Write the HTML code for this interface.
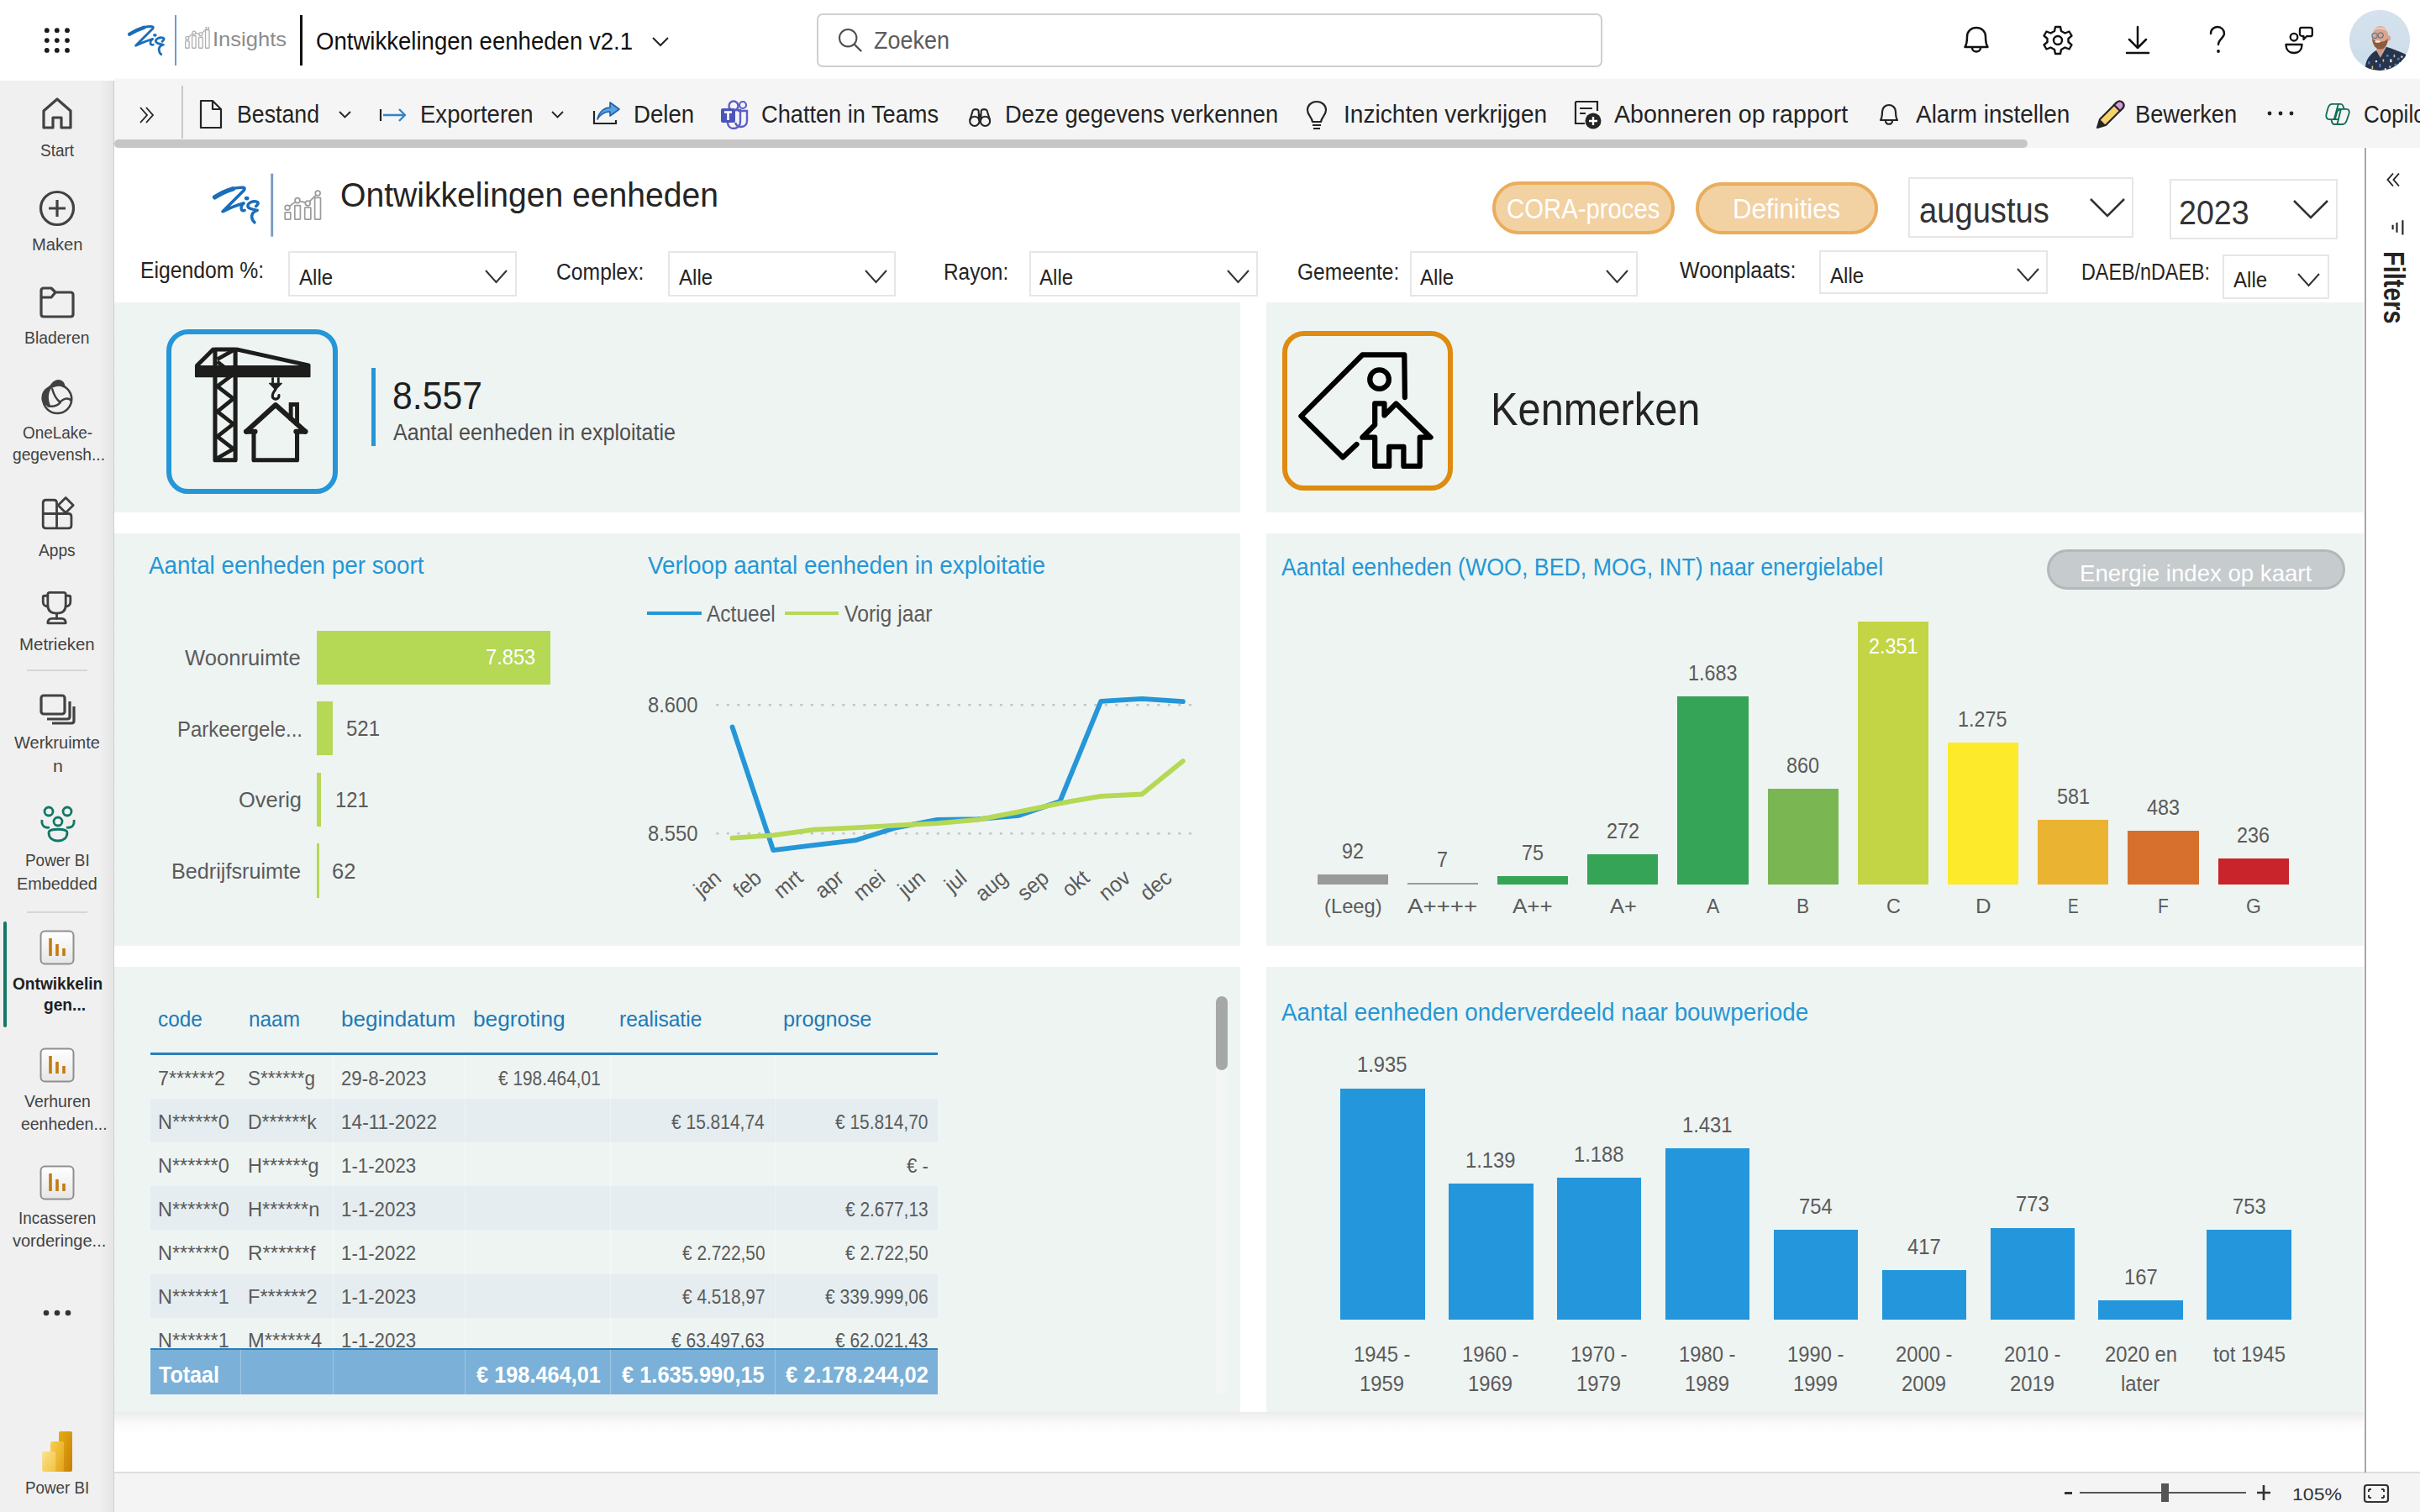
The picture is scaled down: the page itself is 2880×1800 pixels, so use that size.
<!DOCTYPE html>
<html><head><meta charset="utf-8"><title>Ontwikkelingen eenheden v2.1 - Power BI</title>
<style>
html,body{margin:0;padding:0;width:2880px;height:1800px;overflow:hidden;background:#fff;font-family:"Liberation Sans", sans-serif;}
.t{position:absolute;white-space:nowrap;}
.a{position:absolute;}

</style></head><body>
<div class="a" style="left:0px;top:96px;width:136px;height:1704px;background:#f0f0f0;"></div>
<div class="a" style="left:136px;top:95px;width:2744px;height:81px;background:#f5f5f5;box-shadow:0 -1px 2px rgba(0,0,0,0.06);"></div>
<div class="a" style="left:136px;top:166px;width:2277px;height:10px;background:#c6c6c6;border-radius:5px;"></div>
<div class="a" style="left:136px;top:1751.6px;width:2744px;height:48.4px;background:#f4f4f4;border-top:2px solid #dedede;box-sizing:border-box;"></div>
<div class="a" style="left:118px;top:96px;width:18px;height:1704px;background:linear-gradient(to right, rgba(0,0,0,0), rgba(0,0,0,0.05));"></div>
<div class="a" style="left:134.5px;top:96px;width:1.5px;height:1704px;background:rgba(0,0,0,0.09);"></div>
<div class="a" style="left:2814px;top:176px;width:1.8px;height:1577px;background:#a9a6a4;"></div>
<svg class="a" style="left:0px;top:0px;" width="100" height="96" viewBox="0 0 100 96"><circle cx="55.8" cy="36.2" r="2.9" fill="#1b1b1b"/><circle cx="55.8" cy="48.1" r="2.9" fill="#1b1b1b"/><circle cx="55.8" cy="59.9" r="2.9" fill="#1b1b1b"/><circle cx="67.8" cy="36.2" r="2.9" fill="#1b1b1b"/><circle cx="67.8" cy="48.1" r="2.9" fill="#1b1b1b"/><circle cx="67.8" cy="59.9" r="2.9" fill="#1b1b1b"/><circle cx="80" cy="36.2" r="2.9" fill="#1b1b1b"/><circle cx="80" cy="48.1" r="2.9" fill="#1b1b1b"/><circle cx="80" cy="59.9" r="2.9" fill="#1b1b1b"/></svg>
<svg class="a" style="left:147.8px;top:24.7px;" width="55.79" height="43.84" viewBox="0 0 1924 1512"><path d="M210 545 C 500 330, 900 200, 1140 230 C 1200 240, 1190 290, 1150 330 L 470 1010 C 700 900, 950 800, 1150 745" fill="none" stroke="#1a6dba" stroke-width="100" stroke-linecap="round" stroke-linejoin="round"/>
<path d="M1150 745 C 1080 800, 1050 900, 1090 960 C 1120 990, 1170 985, 1185 970" fill="none" stroke="#1a6dba" stroke-width="96" stroke-linecap="round"/>
<ellipse cx="1255" cy="580" rx="78" ry="64" fill="#1a6dba"/>
<path d="M1555 840 C 1620 790, 1660 720, 1580 690 C 1450 660, 1290 720, 1290 830 C 1290 920, 1450 940, 1600 975 C 1500 1000, 1420 1050, 1420 1180 C 1420 1260, 1460 1320, 1510 1370" fill="none" stroke="#1a6dba" stroke-width="96" stroke-linecap="round" stroke-linejoin="round"/>
<path d="M210 545 C 400 420, 600 330, 800 270" fill="none" stroke="#1a6dba" stroke-width="150" stroke-linecap="round"/></svg>
<div class="a" style="left:208px;top:18px;width:2px;height:60px;background:#6d9bd0;"></div>
<svg class="a" style="left:218px;top:32px;" width="34" height="26" viewBox="0 0 34 26"><g transform="scale(0.0886)" fill="none" stroke="#b0b0b0" stroke-width="15"><rect x="30" y="190" width="50" height="95" rx="5"/><rect x="120" y="120" width="50" height="165" rx="5"/><rect x="210" y="140" width="52" height="145" rx="5"/><rect x="300" y="40" width="50" height="245" rx="5"/><path d="M55 150 L145 80 L235 100 L325 15"/><circle cx="55" cy="150" r="22" fill="#fff"/><circle cx="145" cy="80" r="22" fill="#fff"/><circle cx="235" cy="100" r="22" fill="#fff"/><circle cx="325" cy="15" r="20" fill="#fff"/></g></svg>
<div class="t" style="left:252.86px;top:35.40px;font-size:23.84px;line-height:23.84px;color:#8c8c8c;transform:scaleX(1.0723);transform-origin:0 0;">Insights</div>
<div class="a" style="left:357px;top:18px;width:3px;height:60px;background:#111;"></div>
<div class="t" style="left:376.05px;top:34.50px;font-size:29.07px;line-height:29.07px;color:#111;transform:scaleX(0.9486);transform-origin:0 0;">Ontwikkelingen eenheden v2.1</div>
<svg class="a" style="left:775px;top:42px;" width="22" height="16" viewBox="0 0 22 16"><path d="M2 3 L11 12 L20 3" fill="none" stroke="#222" stroke-width="2"/></svg>
<div class="a" style="left:972px;top:16px;width:935px;height:64px;border:2px solid #cfcfcf;border-radius:7px;box-sizing:border-box;background:#fff;"></div>
<svg class="a" style="left:996px;top:32px;" width="32" height="32" viewBox="0 0 32 32"><circle cx="13.2" cy="13.2" r="10.2" fill="none" stroke="#505050" stroke-width="2.1"/><path d="M20.8 20.8 L28.5 28.5" stroke="#505050" stroke-width="2.3" stroke-linecap="round"/></svg>
<div class="t" style="left:1040.00px;top:34.20px;font-size:28.63px;line-height:28.63px;color:#5c5c5c;transform:scaleX(0.9412);transform-origin:0 0;">Zoeken</div>
<svg class="a" style="left:2332px;top:26px;" width="40" height="42" viewBox="0 0 40 42"><path d="M6.5 30 C 9 26, 9 22, 9 17.5 C 9 11, 14 7, 20 7 C 26 7, 31 11, 31 17.5 C 31 22, 31 26, 33.5 30 Z" fill="none" stroke="#111" stroke-width="2.5" stroke-linejoin="round"/><path d="M15 31 C 15 37, 25 37, 25 31" fill="none" stroke="#111" stroke-width="2.5"/></svg>
<svg class="a" style="left:2428px;top:28px;" width="42" height="40" viewBox="0 0 42 40"><g transform="translate(21,20)"><path d="M-3 -16 L3 -16 L4 -11 L8.5 -8.5 L13.5 -10.5 L16.5 -5.5 L12.5 -2 L12.5 2 L16.5 5.5 L13.5 10.5 L8.5 8.5 L4 11 L3 16 L-3 16 L-4 11 L-8.5 8.5 L-13.5 10.5 L-16.5 5.5 L-12.5 2 L-12.5 -2 L-16.5 -5.5 L-13.5 -10.5 L-8.5 -8.5 L-4 -11 Z" fill="none" stroke="#111" stroke-width="2.4" stroke-linejoin="round"/><circle r="5" fill="none" stroke="#111" stroke-width="2.4"/></g></svg>
<svg class="a" style="left:2526px;top:28px;" width="36" height="40" viewBox="0 0 36 40"><path d="M18 4 L18 29 M8 19 L18 29 L28 19" fill="none" stroke="#111" stroke-width="2.5" stroke-linecap="round" stroke-linejoin="round"/><path d="M5 35 L31 35" stroke="#111" stroke-width="2.5" stroke-linecap="round"/></svg>
<svg class="a" style="left:2624px;top:30px;" width="30" height="36" viewBox="0 0 30 36"><path d="M7 10 C 7 4, 12 2, 15 2 C 20 2, 23 6, 23 10 C 23 15, 16 17, 16 23" fill="none" stroke="#111" stroke-width="2.4" stroke-linecap="round"/><circle cx="16" cy="31" r="1.9" fill="#111"/></svg>
<svg class="a" style="left:2716px;top:30px;" width="42" height="36" viewBox="0 0 42 36"><circle cx="14" cy="14.2" r="4.3" fill="none" stroke="#111" stroke-width="2.3"/><path d="M4.5 23 L23.5 23 C 23.5 29.5, 19.5 33, 14 33 C 8.5 33, 4.5 29.5, 4.5 23 Z" fill="none" stroke="#111" stroke-width="2.3" stroke-linejoin="round"/><path d="M23 2.8 L33.5 2.8 C 35 2.8, 35.8 3.6, 35.8 5 L35.8 11 C 35.8 12.4, 35 13.2, 33.5 13.2 L29 13.2 L25.5 17 L25.5 13.2 C 23.9 13.2, 21 12.4, 21 11 L21 5 C 21 3.6, 21.8 2.8, 23 2.8 Z" fill="none" stroke="#111" stroke-width="2.3" stroke-linejoin="round"/></svg>
<svg class="a" style="left:2790px;top:8px;" width="85" height="82" viewBox="0 0 1567 1512"><defs><clipPath id="avc"><circle cx="775" cy="735" r="665"/></clipPath><linearGradient id="sky" x1="0" y1="0" x2="0" y2="1"><stop offset="0" stop-color="#d6e3ee"/><stop offset="1" stop-color="#c9dbe8"/></linearGradient></defs>
<g clip-path="url(#avc)"><rect width="1567" height="1512" fill="url(#sky)"/>
<path d="M700 960 L790 1120 L900 900 L880 850 L720 880 Z" fill="#d39a88"/>
<path d="M430 1512 L470 1250 C 500 1120, 600 1020, 700 960 L790 1120 L920 880 C 1050 920, 1200 980, 1340 1040 L1600 1512 Z" fill="#26344c"/>
<rect x="520" y="1200" width="40" height="60" fill="#4f7fc0"/><rect x="600" y="1300" width="30" height="70" fill="#d9c08a"/><rect x="680" y="1180" width="40" height="40" fill="#e8e8e8"/><rect x="760" y="1250" width="40" height="80" fill="#4f7fc0"/><rect x="840" y="1150" width="30" height="60" fill="#d9c08a"/><rect x="920" y="1050" width="50" height="50" fill="#4f7fc0"/><rect x="1000" y="1150" width="40" height="70" fill="#e8e8e8"/><rect x="1080" y="1050" width="30" height="60" fill="#d9c08a"/><rect x="1160" y="1120" width="50" height="50" fill="#4f7fc0"/><rect x="1240" y="1080" width="40" height="40" fill="#e8e8e8"/><rect x="880" y="1350" width="40" height="60" fill="#e8e8e8"/><rect x="980" y="1300" width="40" height="40" fill="#d9c08a"/><rect x="1100" y="1250" width="50" height="60" fill="#4f7fc0"/><rect x="1200" y="1220" width="30" height="50" fill="#d9c08a"/><rect x="560" y="1420" width="40" height="40" fill="#d9c08a"/><rect x="700" y="1420" width="40" height="50" fill="#4f7fc0"/>
<ellipse cx="975" cy="690" rx="38" ry="60" fill="#d9a08a"/>
<ellipse cx="790" cy="680" rx="180" ry="255" fill="#dda58f"/>
<path d="M650 520 C 700 430, 900 420, 960 560 C 900 470, 720 470, 650 520 Z" fill="#ecd2c6"/>
<path d="M610 690 C 615 850, 700 935, 790 935 C 880 935, 945 850, 955 690 C 900 790, 680 800, 610 690 Z" fill="#8c5a3c"/>
<ellipse cx="730" cy="765" rx="60" ry="24" fill="#f4efea"/>
<circle cx="665" cy="635" r="58" fill="none" stroke="#6f7b88" stroke-width="24"/><circle cx="795" cy="628" r="58" fill="none" stroke="#6f7b88" stroke-width="24"/>
</g></svg>
<svg class="a" style="left:160px;top:122px;" width="30" height="30" viewBox="0 0 30 30"><path d="M7 6 L15 15 L7 24 M14 6 L22 15 L14 24" fill="none" stroke="#222" stroke-width="1.8"/></svg>
<div class="a" style="left:216px;top:102px;width:2px;height:63px;background:#c8c8c8;"></div>
<svg class="a" style="left:236px;top:118px;" width="30" height="36" viewBox="0 0 30 36"><path d="M3 2 L17 2 L27 12 L27 34 L3 34 Z M17 2 L17 12 L27 12" fill="none" stroke="#242424" stroke-width="2.2" stroke-linejoin="round"/></svg>
<div class="t" style="left:282.19px;top:121.10px;font-size:29.51px;line-height:29.51px;color:#242424;transform:scaleX(0.9061);transform-origin:0 0;">Bestand</div>
<svg class="a" style="left:402px;top:131px;" width="17" height="11" viewBox="0 0 17 11"><path d="M2 2 L8.5 8.5 L15 2" fill="none" stroke="#242424" stroke-width="1.8"/></svg>
<svg class="a" style="left:450px;top:126px;" width="36" height="22" viewBox="0 0 36 22"><path d="M3 4 L3 18" stroke="#242424" stroke-width="2.2"/><path d="M6 11 L32 11 M25 4 L32 11 L25 18" fill="none" stroke="#2f86c6" stroke-width="2.4" stroke-linejoin="round"/></svg>
<div class="t" style="left:500.13px;top:121.10px;font-size:29.51px;line-height:29.51px;color:#242424;transform:scaleX(0.9333);transform-origin:0 0;">Exporteren</div>
<svg class="a" style="left:655px;top:131px;" width="17" height="11" viewBox="0 0 17 11"><path d="M2 2 L8.5 8.5 L15 2" fill="none" stroke="#242424" stroke-width="1.8"/></svg>
<svg class="a" style="left:704px;top:118px;" width="36" height="32" viewBox="0 0 36 32"><path d="M3 14 L3 29 L29 29 L29 25" fill="none" stroke="#242424" stroke-width="2.2"/><path d="M7 24 C 9 14, 16 10, 22 10 L22 4 L33 12 L22 20 L22 15 C 16 15, 11 17, 7 24 Z" fill="#5aa3e3" stroke="#1f5fa8" stroke-width="1.6" stroke-linejoin="round"/></svg>
<div class="t" style="left:754.13px;top:121.10px;font-size:29.51px;line-height:29.51px;color:#242424;transform:scaleX(0.9366);transform-origin:0 0;">Delen</div>
<svg class="a" style="left:856px;top:118px;" width="36" height="36" viewBox="0 0 36 36"><circle cx="28" cy="7" r="4" fill="none" stroke="#5b5fc7" stroke-width="2.2"/><path d="M22 14 L33 14 L33 26 C 33 31, 29 33, 26 33 C 22 33, 20 31, 19 28" fill="none" stroke="#5b5fc7" stroke-width="2.4"/><circle cx="17" cy="8" r="5.5" fill="none" stroke="#5b5fc7" stroke-width="2.4"/><path d="M10 13 L25 13 L25 27 C 25 32, 21 35, 17 35 C 13 35, 10 32, 10 28 Z" fill="none" stroke="#5b5fc7" stroke-width="2.4"/><rect x="2" y="11" width="17" height="17" rx="2" fill="#4b53bc"/><path d="M6 15.5 L15 15.5 M10.5 15.5 L10.5 25" stroke="#fff" stroke-width="2.6"/></svg>
<div class="t" style="left:906.08px;top:121.10px;font-size:29.51px;line-height:29.51px;color:#242424;transform:scaleX(0.9218);transform-origin:0 0;">Chatten in Teams</div>
<svg class="a" style="left:840px;top:100px;" width="360" height="60" viewBox="0 0 2420 403"><g fill="none" stroke="#242424" stroke-width="14" stroke-linejoin="round"><path d="M2112 290 L2135 215 C 2140 198, 2178 198, 2182 215 L2186 290"/><path d="M2273 290 L2250 215 C 2245 198, 2207 198, 2203 215 L2199 290"/><circle cx="2150" cy="298" r="38"/><circle cx="2235" cy="298" r="38"/></g><rect x="2180" y="240" width="25" height="25" fill="#242424"/></svg>
<div class="t" style="left:1196.15px;top:121.10px;font-size:29.51px;line-height:29.51px;color:#242424;transform:scaleX(0.9265);transform-origin:0 0;">Deze gegevens verkennen</div>
<svg class="a" style="left:1552px;top:118px;" width="30" height="38" viewBox="0 0 30 38"><path d="M15 3 C 8 3, 4 8, 4 13 C 4 19, 9 21, 10 27 L20 27 C 21 21, 26 19, 26 13 C 26 8, 22 3, 15 3 Z" fill="none" stroke="#242424" stroke-width="2.2"/><path d="M10 31 L20 31 M11 35 L19 35" stroke="#242424" stroke-width="2.2"/></svg>
<div class="t" style="left:1599.09px;top:121.10px;font-size:29.51px;line-height:29.51px;color:#242424;transform:scaleX(0.9532);transform-origin:0 0;">Inzichten verkrijgen</div>
<svg class="a" style="left:1872px;top:118px;" width="36" height="38" viewBox="0 0 36 38"><path d="M3 3 L29 3 L29 14 M3 3 L3 29 L14 29" fill="none" stroke="#242424" stroke-width="2.2"/><path d="M8 11 L23 11 M8 17 L15 17" stroke="#242424" stroke-width="2.2"/><circle cx="24" cy="26" r="9.5" fill="#242424"/><path d="M24 21 L24 31 M19 26 L29 26" stroke="#fff" stroke-width="2.4"/></svg>
<div class="t" style="left:1921.00px;top:121.10px;font-size:29.51px;line-height:29.51px;color:#242424;transform:scaleX(0.9692);transform-origin:0 0;">Abonneren op rapport</div>
<svg class="a" style="left:2234px;top:122px;" width="28" height="30" viewBox="0 0 28 30"><path d="M4 21 C 6 18, 6 15, 6 11 C 6 6, 10 3, 14 3 C 18 3, 22 6, 22 11 C 22 15, 22 18, 24 21 Z" fill="none" stroke="#242424" stroke-width="2.2" stroke-linejoin="round"/><path d="M10 22 C 10 27, 18 27, 18 22" fill="none" stroke="#242424" stroke-width="2.2"/></svg>
<div class="t" style="left:2280.00px;top:121.10px;font-size:29.51px;line-height:29.51px;color:#242424;transform:scaleX(0.9476);transform-origin:0 0;">Alarm instellen</div>
<svg class="a" style="left:2492px;top:118px;" width="38" height="38" viewBox="0 0 38 38"><path d="M4 34 L7 24 L27 4 C 29 2, 32 2, 34 4 C 36 6, 36 9, 34 11 L14 31 Z" fill="#f6d36f" stroke="#242424" stroke-width="2.2" stroke-linejoin="round"/><path d="M27 4 C 29 2, 32 2, 34 4 C 36 6, 36 9, 34 11 L31 14 L24 7 Z" fill="#d59be0" stroke="#242424" stroke-width="2.2"/><path d="M4 34 L7 24 L14 31 Z" fill="#242424"/></svg>
<div class="t" style="left:2541.15px;top:121.10px;font-size:29.51px;line-height:29.51px;color:#242424;transform:scaleX(0.9235);transform-origin:0 0;">Bewerken</div>
<svg class="a" style="left:2696px;top:130px;" width="36" height="10" viewBox="0 0 36 10"><circle cx="5" cy="5" r="2.4" fill="#242424"/><circle cx="18" cy="5" r="2.4" fill="#242424"/><circle cx="31" cy="5" r="2.4" fill="#242424"/></svg>
<svg class="a" style="left:2755px;top:110px;" width="60" height="50" viewBox="0 0 1814 1512"><g fill="none" stroke="#0f6e57" stroke-width="56" stroke-linecap="round" stroke-linejoin="round"><path d="M840 420 L620 420 C 540 420, 500 470, 470 560 L410 780 C 380 890, 420 970, 520 970 L840 970"/><path d="M840 420 L690 960"/><path d="M840 420 L930 420 C 990 420, 1010 460, 1045 590"/><path d="M820 600 L1140 600 C 1220 600, 1250 680, 1220 780 L1160 960 C 1120 1090, 1060 1150, 990 1150 L700 1150 C 640 1150, 610 1110, 590 990"/><path d="M930 620 L800 1150"/><path d="M920 615 C 850 615, 810 650, 790 720 L740 900 C 730 940, 720 960, 700 965"/></g></svg>
<div class="t" style="left:2813.12px;top:121.10px;font-size:29.51px;line-height:29.51px;color:#242424;transform:scaleX(0.8800);transform-origin:0 0;">Copilot</div>
<svg class="a" style="left:48px;top:114px;" width="40" height="42" viewBox="0 0 40 42"><path d="M4 18 L20 4 L36 18 L36 38 L25 38 L25 26 L15 26 L15 38 L4 38 Z" fill="none" stroke="#424242" stroke-width="3.2" stroke-linejoin="round"/></svg>
<div class="t" style="left:47.60px;top:168.90px;font-size:20.06px;line-height:20.06px;color:#424242;transform:scaleX(0.9470);transform-origin:0 0;">Start</div>
<svg class="a" style="left:46px;top:226px;" width="44" height="44" viewBox="0 0 44 44"><circle cx="22" cy="22" r="19.5" fill="none" stroke="#424242" stroke-width="3.2"/><path d="M22 12 L22 32 M12 22 L32 22" stroke="#424242" stroke-width="3.2"/></svg>
<div class="t" style="left:38.20px;top:280.60px;font-size:20.06px;line-height:20.06px;color:#424242;transform:scaleX(1.0031);transform-origin:0 0;">Maken</div>
<svg class="a" style="left:46px;top:340px;" width="44" height="40" viewBox="0 0 44 40"><path d="M3 6 C 3 4, 4 3, 6 3 L15 3 L20 8 L38 8 C 40 8, 41 9, 41 11 L41 34 C 41 36, 40 37, 38 37 L6 37 C 4 37, 3 36, 3 34 Z M3 14 L15 14 L20 8" fill="none" stroke="#424242" stroke-width="3.2" stroke-linejoin="round"/></svg>
<div class="t" style="left:29.43px;top:392.20px;font-size:20.06px;line-height:20.06px;color:#424242;transform:scaleX(0.9655);transform-origin:0 0;">Bladeren</div>
<svg class="a" style="left:40px;top:440px;" width="60" height="60" viewBox="0 0 1512 1512"><g fill="none" stroke="#404040" stroke-width="64" stroke-linecap="round"><circle cx="712" cy="885" r="428"/><path d="M560 585 C 610 770, 700 900, 790 975 C 850 925, 905 870, 1000 870 C 1050 870, 1090 890, 1120 920"/><path d="M440 1095 C 600 1125, 720 1075, 800 985"/></g><path d="M235 880 C 235 640, 370 530, 470 520 C 530 400, 630 305, 740 305 C 850 305, 925 380, 945 490 C 800 470, 600 520, 525 570 C 430 720, 430 900, 505 1075 C 470 1085, 440 1095, 410 1100 C 300 1030, 235 950, 235 880 Z" fill="#404040"/></svg>
<div class="t" style="left:26.50px;top:505.00px;font-size:20.06px;line-height:20.06px;color:#424242;transform:scaleX(0.9443);transform-origin:0 0;">OneLake-</div>
<div class="t" style="left:15.30px;top:531.40px;font-size:20.06px;line-height:20.06px;color:#424242;transform:scaleX(0.9582);transform-origin:0 0;">gegevensh...</div>
<svg class="a" style="left:40px;top:580px;" width="60" height="170" viewBox="0 0 534 1512"><g fill="none" stroke="#404040" stroke-width="25" stroke-linejoin="round" stroke-linecap="round"><path d="M245 280 L245 165 Q245 135 215 135 L130 135 Q100 135 100 165 L100 405 Q100 435 130 435 L370 435 Q400 435 400 405 L400 310 Q400 280 370 280 L100 280 M245 280 L245 435"/><path d="M340 110 L420 190 L340 270 L260 190 Z"/><path d="M170 1115 L320 1115 Q340 1115 340 1135 L340 1250 Q340 1335 245 1335 Q150 1335 150 1250 L150 1135 Q150 1115 170 1115 Z"/><path d="M150 1150 L115 1150 Q100 1150 100 1165 L100 1215 Q100 1260 150 1265 M340 1150 L375 1150 Q390 1150 390 1165 L390 1215 Q390 1260 340 1265"/><path d="M245 1335 L245 1392"/><path d="M195 1392 L295 1392 Q340 1392 340 1440 L150 1440 Q150 1392 195 1392 Z"/></g></svg>
<div class="t" style="left:46.40px;top:645.00px;font-size:20.06px;line-height:20.06px;color:#424242;transform:scaleX(0.9547);transform-origin:0 0;">Apps</div>
<div class="t" style="left:23.28px;top:756.60px;font-size:20.06px;line-height:20.06px;color:#424242;transform:scaleX(1.0190);transform-origin:0 0;">Metrieken</div>
<div class="a" style="left:32px;top:797px;width:72px;height:2px;background:#d6d6d6;"></div>
<svg class="a" style="left:46px;top:824.5px;" width="46" height="40" viewBox="0 0 46 40"><rect x="3" y="3" width="28" height="22" rx="3" fill="none" stroke="#424242" stroke-width="3.2"/><path d="M37 10 L37 28 C 37 30, 36 31, 34 31 L10 31" fill="none" stroke="#424242" stroke-width="3.2"/><path d="M42 16 L42 33 C 42 35, 41 36, 39 36 L16 36" fill="none" stroke="#424242" stroke-width="3.2"/></svg>
<div class="t" style="left:17.10px;top:874.40px;font-size:20.06px;line-height:20.06px;color:#424242;transform:scaleX(0.9985);transform-origin:0 0;">Werkruimte</div>
<div class="t" style="left:62.53px;top:902.00px;font-size:20.06px;line-height:20.06px;color:#424242;transform:scaleX(1.0667);transform-origin:0 0;">n</div>
<svg class="a" style="left:46px;top:958px;" width="46" height="46" viewBox="0 0 46 46"><g fill="none" stroke="#117865" stroke-width="2.8"><circle cx="12" cy="8" r="5"/><circle cx="34" cy="8" r="5"/><circle cx="23" cy="20" r="5"/><path d="M4 18 C 3 26, 8 28, 13 27 M42 18 C 43 26, 38 28, 33 27"/><path d="M12 33 C 12 28, 34 28, 34 33 C 34 40, 29 43, 23 43 C 17 43, 12 40, 12 33 Z"/></g></svg>
<div class="t" style="left:30.46px;top:1014.40px;font-size:20.06px;line-height:20.06px;color:#424242;transform:scaleX(0.9433);transform-origin:0 0;">Power BI</div>
<div class="t" style="left:20.41px;top:1042.30px;font-size:20.06px;line-height:20.06px;color:#424242;transform:scaleX(0.9872);transform-origin:0 0;">Embedded</div>
<div class="a" style="left:32px;top:1085px;width:72px;height:2px;background:#d6d6d6;"></div>
<div class="a" style="left:4px;top:1096.8px;width:3.8px;height:126px;background:#117865;border-radius:2px;"></div>
<svg class="a" style="left:47px;top:1107px;" width="42" height="42" viewBox="0 0 42 42"><defs><linearGradient id="rg" x1="0" y1="0" x2="0" y2="1"><stop offset="0" stop-color="#ffffff"/><stop offset="1" stop-color="#e6e6e6"/></linearGradient></defs><rect x="1.5" y="1.5" width="39" height="39" rx="5" fill="url(#rg)" stroke="#8f8f8f" stroke-width="2"/><path d="M13 10 L13 31 M21 17 L21 31 M29 22 L29 31" stroke="#c47b10" stroke-width="3.6"/></svg>
<div class="t" style="left:14.90px;top:1161.00px;font-size:20.79px;line-height:20.79px;color:#1f1f1f;font-weight:700;transform:scaleX(0.9192);transform-origin:0 0;">Ontwikkelin</div>
<div class="t" style="left:51.50px;top:1185.50px;font-size:20.79px;line-height:20.79px;color:#1f1f1f;font-weight:700;transform:scaleX(0.9222);transform-origin:0 0;">gen...</div>
<svg class="a" style="left:47px;top:1247px;" width="42" height="42" viewBox="0 0 42 42"><defs><linearGradient id="rg" x1="0" y1="0" x2="0" y2="1"><stop offset="0" stop-color="#ffffff"/><stop offset="1" stop-color="#e6e6e6"/></linearGradient></defs><rect x="1.5" y="1.5" width="39" height="39" rx="5" fill="url(#rg)" stroke="#8f8f8f" stroke-width="2"/><path d="M13 10 L13 31 M21 17 L21 31 M29 22 L29 31" stroke="#c47b10" stroke-width="3.6"/></svg>
<div class="t" style="left:29.30px;top:1301.20px;font-size:20.06px;line-height:20.06px;color:#424242;transform:scaleX(0.9687);transform-origin:0 0;">Verhuren</div>
<div class="t" style="left:24.90px;top:1328.30px;font-size:20.06px;line-height:20.06px;color:#424242;transform:scaleX(0.9690);transform-origin:0 0;">eenheden...</div>
<svg class="a" style="left:47px;top:1387px;" width="42" height="42" viewBox="0 0 42 42"><defs><linearGradient id="rg" x1="0" y1="0" x2="0" y2="1"><stop offset="0" stop-color="#ffffff"/><stop offset="1" stop-color="#e6e6e6"/></linearGradient></defs><rect x="1.5" y="1.5" width="39" height="39" rx="5" fill="url(#rg)" stroke="#8f8f8f" stroke-width="2"/><path d="M13 10 L13 31 M21 17 L21 31 M29 22 L29 31" stroke="#c47b10" stroke-width="3.6"/></svg>
<div class="t" style="left:22.06px;top:1440.20px;font-size:20.06px;line-height:20.06px;color:#424242;transform:scaleX(0.9415);transform-origin:0 0;">Incasseren</div>
<div class="t" style="left:14.90px;top:1467.30px;font-size:20.06px;line-height:20.06px;color:#424242;">vorderinge...</div>
<svg class="a" style="left:50px;top:1556px;" width="36" height="14" viewBox="0 0 36 14"><circle cx="5" cy="7" r="3.3" fill="#333"/><circle cx="18" cy="7" r="3.3" fill="#333"/><circle cx="31" cy="7" r="3.3" fill="#333"/></svg>
<svg class="a" style="left:48px;top:1702px;" width="40" height="52" viewBox="0 0 40 52"><defs><linearGradient id="pb1" x1="0" y1="0" x2="1" y2="1"><stop offset="0" stop-color="#e6ad10"/><stop offset="1" stop-color="#c87e0a"/></linearGradient><linearGradient id="pb2" x1="0" y1="0" x2="1" y2="1"><stop offset="0" stop-color="#f6d04d"/><stop offset="1" stop-color="#e3a21a"/></linearGradient><linearGradient id="pb3" x1="0" y1="0" x2="1" y2="1"><stop offset="0" stop-color="#fbe38a"/><stop offset="1" stop-color="#f2c244"/></linearGradient></defs><rect x="22" y="2" width="16" height="48" rx="2" fill="url(#pb1)"/><rect x="12.1" y="14" width="16" height="36" rx="2" fill="url(#pb2)"/><rect x="2.2" y="26" width="16" height="24" rx="2" fill="url(#pb3)"/></svg>
<div class="t" style="left:30.35px;top:1761.60px;font-size:19.77px;line-height:19.77px;color:#424242;transform:scaleX(0.9492);transform-origin:0 0;">Power BI</div>
<div class="a" style="left:2457px;top:1776px;width:9px;height:3px;background:#333;"></div>
<div class="a" style="left:2475px;top:1776px;width:198px;height:2px;background:#555;"></div>
<div class="a" style="left:2572px;top:1766px;width:9px;height:22px;background:#555;"></div>
<svg class="a" style="left:2684px;top:1766px;" width="20" height="22" viewBox="0 0 20 22"><path d="M10 2 L10 20 M2 11 L18 11" stroke="#333" stroke-width="2.6"/></svg>
<div class="t" style="left:2727.91px;top:1768.00px;font-size:21.08px;line-height:21.08px;color:#333;transform:scaleX(1.0932);transform-origin:0 0;">105%</div>
<svg class="a" style="left:2812px;top:1766px;" width="32" height="24" viewBox="0 0 32 24"><path d="M2 8 L2 5 C 2 3, 3 2, 5 2 L27 2 C 29 2, 30 3, 30 5 L30 19 C 30 21, 29 22, 27 22 L5 22 C 3 22, 2 21, 2 19 Z" fill="none" stroke="#333" stroke-width="2.2"/><path d="M7 7 L7 10 M7 7 L10 7 M25 7 L25 10 M25 7 L22 7 M7 17 L7 14 M7 17 L10 17 M25 17 L25 14 M25 17 L22 17" stroke="#333" stroke-width="2"/></svg>
<svg class="a" style="left:2830px;top:195px;" width="40" height="100" viewBox="0 0 40 100"><path d="M2848 206.5 L2841.5 214 L2848 221.5 M2855 206.5 L2848.5 214 L2855 221.5" fill="none" stroke="#252423" stroke-width="1.9" transform="translate(-2830,-195)"/><path d="M2859.4 262.2 L2859.4 279.6 M2852.5 265 L2852.5 276.8 M2847.6 267.8 L2847.6 273.3" stroke="#252423" stroke-width="2.1" transform="translate(-2830,-195)"/></svg>
<div class="t" style="left:2866.00px;top:299.32px;font-size:34.30px;line-height:34.30px;color:#252423;font-weight:700;transform:rotate(90deg) scaleX(0.8413);transform-origin:0 0;">Filters</div>
<svg class="a" style="left:240px;top:195px;" width="320" height="100" viewBox="0 0 320 100"><g transform="scale(0.13223)">
<rect x="622" y="88" width="22" height="567" fill="#7b9cc4"/>
<g fill="none" stroke="#9c9c9c" stroke-width="13"><rect x="750" y="438" width="50" height="62" rx="4"/><rect x="838" y="375" width="50" height="125" rx="4"/><rect x="928" y="395" width="54" height="105" rx="4"/><rect x="1018" y="305" width="52" height="195" rx="4"/><path d="M772 395 L862 330 L955 355 L1045 265"/><circle cx="772" cy="395" r="22" fill="#fff"/><circle cx="862" cy="330" r="22" fill="#fff"/><circle cx="955" cy="355" r="22" fill="#fff"/><circle cx="1045" cy="265" r="22" fill="#fff"/></g>
</g></svg>
<svg class="a" style="left:248px;top:215px;" width="70.0" height="55.0" viewBox="0 0 1924 1512"><path d="M210 545 C 500 330, 900 200, 1140 230 C 1200 240, 1190 290, 1150 330 L 470 1010 C 700 900, 950 800, 1150 745" fill="none" stroke="#1a6dba" stroke-width="100" stroke-linecap="round" stroke-linejoin="round"/>
<path d="M1150 745 C 1080 800, 1050 900, 1090 960 C 1120 990, 1170 985, 1185 970" fill="none" stroke="#1a6dba" stroke-width="96" stroke-linecap="round"/>
<ellipse cx="1255" cy="580" rx="78" ry="64" fill="#1a6dba"/>
<path d="M1555 840 C 1620 790, 1660 720, 1580 690 C 1450 660, 1290 720, 1290 830 C 1290 920, 1450 940, 1600 975 C 1500 1000, 1420 1050, 1420 1180 C 1420 1260, 1460 1320, 1510 1370" fill="none" stroke="#1a6dba" stroke-width="96" stroke-linecap="round" stroke-linejoin="round"/>
<path d="M210 545 C 400 420, 600 330, 800 270" fill="none" stroke="#1a6dba" stroke-width="150" stroke-linecap="round"/></svg>
<div class="t" style="left:405.03px;top:211.90px;font-size:40.41px;line-height:40.41px;color:#252423;transform:scaleX(0.9678);transform-origin:0 0;">Ontwikkelingen eenheden</div>
<div class="t" style="left:167.18px;top:307.70px;font-size:27.18px;line-height:27.18px;color:#252423;transform:scaleX(0.9110);transform-origin:0 0;">Eigendom %:</div>
<div class="a" style="left:343px;top:299px;width:272px;height:54px;border:2px solid #e6e6e6;box-sizing:border-box;background:#fff;"></div>
<div class="t" style="left:356.00px;top:316.50px;font-size:26.16px;line-height:26.16px;color:#252423;transform:scaleX(0.9200);transform-origin:0 0;">Alle</div>
<svg class="a" style="left:576px;top:320px;" width="29" height="18" viewBox="0 0 29 18"><path d="M2 2 L14.5 16 L27 2" fill="none" stroke="#333" stroke-width="2"/></svg>
<div class="t" style="left:662.09px;top:309.50px;font-size:27.18px;line-height:27.18px;color:#252423;transform:scaleX(0.9090);transform-origin:0 0;">Complex:</div>
<div class="a" style="left:795px;top:299px;width:271px;height:54px;border:2px solid #e6e6e6;box-sizing:border-box;background:#fff;"></div>
<div class="t" style="left:808.00px;top:316.50px;font-size:26.16px;line-height:26.16px;color:#252423;transform:scaleX(0.9200);transform-origin:0 0;">Alle</div>
<svg class="a" style="left:1028px;top:320px;" width="29" height="18" viewBox="0 0 29 18"><path d="M2 2 L14.5 16 L27 2" fill="none" stroke="#333" stroke-width="2"/></svg>
<div class="t" style="left:1123.21px;top:309.50px;font-size:27.18px;line-height:27.18px;color:#252423;transform:scaleX(0.8965);transform-origin:0 0;">Rayon:</div>
<div class="a" style="left:1225px;top:299px;width:272px;height:54px;border:2px solid #e6e6e6;box-sizing:border-box;background:#fff;"></div>
<div class="t" style="left:1237.00px;top:317.20px;font-size:26.16px;line-height:26.16px;color:#252423;transform:scaleX(0.9200);transform-origin:0 0;">Alle</div>
<svg class="a" style="left:1458.5px;top:319.5px;" width="29" height="18" viewBox="0 0 29 18"><path d="M2 2 L14.5 16 L27 2" fill="none" stroke="#333" stroke-width="2"/></svg>
<div class="t" style="left:1544.10px;top:309.50px;font-size:27.18px;line-height:27.18px;color:#252423;transform:scaleX(0.9024);transform-origin:0 0;">Gemeente:</div>
<div class="a" style="left:1678px;top:299px;width:271px;height:54px;border:2px solid #e6e6e6;box-sizing:border-box;background:#fff;"></div>
<div class="t" style="left:1690.00px;top:317.20px;font-size:26.16px;line-height:26.16px;color:#252423;transform:scaleX(0.9200);transform-origin:0 0;">Alle</div>
<svg class="a" style="left:1910px;top:319.5px;" width="29" height="18" viewBox="0 0 29 18"><path d="M2 2 L14.5 16 L27 2" fill="none" stroke="#333" stroke-width="2"/></svg>
<div class="t" style="left:1999.00px;top:307.80px;font-size:27.18px;line-height:27.18px;color:#252423;transform:scaleX(0.9195);transform-origin:0 0;">Woonplaats:</div>
<div class="a" style="left:2165px;top:298px;width:272px;height:52px;border:2px solid #e6e6e6;box-sizing:border-box;background:#fff;"></div>
<div class="t" style="left:2178.00px;top:314.50px;font-size:26.16px;line-height:26.16px;color:#252423;transform:scaleX(0.9200);transform-origin:0 0;">Alle</div>
<svg class="a" style="left:2398.5px;top:317.5px;" width="29" height="18" viewBox="0 0 29 18"><path d="M2 2 L14.5 16 L27 2" fill="none" stroke="#333" stroke-width="2"/></svg>
<div class="t" style="left:2477.28px;top:309.80px;font-size:27.18px;line-height:27.18px;color:#252423;transform:scaleX(0.8589);transform-origin:0 0;">DAEB/nDAEB:</div>
<div class="a" style="left:2645px;top:303px;width:127px;height:53px;border:2px solid #e6e6e6;box-sizing:border-box;background:#fff;"></div>
<div class="t" style="left:2658.00px;top:320.00px;font-size:26.16px;line-height:26.16px;color:#252423;transform:scaleX(0.9200);transform-origin:0 0;">Alle</div>
<svg class="a" style="left:2732.5px;top:324px;" width="29" height="18" viewBox="0 0 29 18"><path d="M2 2 L14.5 16 L27 2" fill="none" stroke="#333" stroke-width="2"/></svg>
<div class="a" style="left:1776px;top:216px;width:217px;height:63px;background:#f2d1a3;border:4px solid #e9ad5c;border-radius:32px;box-sizing:border-box;"></div>
<div class="t" style="left:1793.12px;top:232.00px;font-size:33.43px;line-height:33.43px;color:#ffffff;transform:scaleX(0.8774);transform-origin:0 0;">CORA-proces</div>
<div class="a" style="left:2018px;top:217px;width:217px;height:62px;background:#f2d1a3;border:4px solid #e9ad5c;border-radius:32px;box-sizing:border-box;"></div>
<div class="t" style="left:2062.14px;top:232.00px;font-size:33.43px;line-height:33.43px;color:#ffffff;transform:scaleX(0.9321);transform-origin:0 0;">Definities</div>
<div class="a" style="left:2271px;top:211px;width:268px;height:72px;border:2px solid #e6e6e6;box-sizing:border-box;background:#fff;"></div>
<div class="t" style="left:2283.59px;top:230.00px;font-size:42.00px;line-height:42.00px;color:#333333;transform:scaleX(0.9082);transform-origin:0 0;">augustus</div>
<svg class="a" style="left:2486px;top:234px;" width="44" height="26" viewBox="0 0 44 26"><path d="M2 3 L22 23 L42 3" fill="none" stroke="#333" stroke-width="2.6"/></svg>
<div class="a" style="left:2582px;top:213px;width:200px;height:72px;border:2px solid #e6e6e6;box-sizing:border-box;background:#fff;"></div>
<div class="t" style="left:2592.94px;top:232.80px;font-size:40.41px;line-height:40.41px;color:#333333;transform:scaleX(0.9307);transform-origin:0 0;">2023</div>
<svg class="a" style="left:2728px;top:236px;" width="44" height="26" viewBox="0 0 44 26"><path d="M2 3 L22 23 L42 3" fill="none" stroke="#333" stroke-width="2.6"/></svg>
<div class="a" style="left:136px;top:360px;width:1340px;height:250px;background:#eef4f2;"></div>
<div class="a" style="left:1507px;top:360px;width:1306px;height:250px;background:#eef4f2;"></div>
<div class="a" style="left:136px;top:635px;width:1340px;height:491px;background:#eef4f2;"></div>
<div class="a" style="left:1507px;top:635px;width:1306px;height:491px;background:#eef4f2;"></div>
<div class="a" style="left:136px;top:1681px;width:2677px;height:26px;background:linear-gradient(to bottom, rgba(0,0,0,0.075), rgba(0,0,0,0.02) 50%, rgba(0,0,0,0));"></div>
<div class="a" style="left:136px;top:1151px;width:1340px;height:530px;background:#eef4f2;"></div>
<div class="a" style="left:1476px;top:1151px;width:31px;height:530px;background:#fff;"></div>
<div class="a" style="left:1507px;top:1151px;width:1306px;height:530px;background:#eef4f2;"></div>
<div class="a" style="left:198px;top:392px;width:204px;height:196px;border:6.2px solid #2596d8;border-radius:26px;box-sizing:border-box;"></div>
<svg class="a" style="left:220px;top:400px;" width="160" height="160" viewBox="0 0 160 160"><g transform="scale(0.10582)" fill="none" stroke="#1d1d1b" stroke-linejoin="round">
<path d="M340 1397 L340 152 L568 152 L568 1397 Z" stroke-width="48"/>
<path d="M138 330 L318 152 M590 152 L1390 330" stroke-width="46" stroke-linecap="round"/>
<rect x="113" y="330" width="1300" height="136" rx="10" fill="#1d1d1b" stroke="none"/>
<path d="M365 262 L545 160 M365 290 L545 430 L365 565 L545 705 L365 850 L545 990 L365 1130 L545 1270 L365 1375" stroke-width="44"/>
<path d="M988 466 L988 532 M1052 466 L1052 532" stroke-width="26"/>
<path d="M950 532 L1090 532 L1020 605 Z" fill="#1d1d1b" stroke-width="10"/>
<path d="M1020 600 C 1005 625, 985 640, 985 675 C 985 700, 1005 710, 1022 710 C 1045 710, 1060 690, 1058 668" stroke-width="30" stroke-linecap="round"/>
<path d="M690 1075 L1020 775 L1355 1075" stroke-width="56" stroke-linecap="round"/><path d="M690 1075 L790 1075 M1250 1075 L1355 1075" stroke-width="56" stroke-linecap="round"/>
<path d="M775 1075 L775 1397 L1262 1397 L1262 1075" stroke-width="48"/>
<path d="M1192 950 L1192 770 L1262 770 L1262 1010" stroke-width="46" stroke-linejoin="miter"/>
</g></svg>
<div class="a" style="left:442px;top:438px;width:5px;height:93px;background:#2596d8;"></div>
<div class="t" style="left:467.06px;top:448.50px;font-size:45.35px;line-height:45.35px;color:#1f1f1f;transform:scaleX(0.9436);transform-origin:0 0;">8.557</div>
<div class="t" style="left:468.00px;top:501.30px;font-size:27.18px;line-height:27.18px;color:#4d4d4d;transform:scaleX(0.9229);transform-origin:0 0;">Aantal eenheden in exploitatie</div>
<div class="a" style="left:1526px;top:394px;width:203px;height:190px;border:6px solid #de8b0f;border-radius:26px;box-sizing:border-box;"></div>
<svg class="a" style="left:1480px;top:360px;" width="720" height="260" viewBox="0 0 720 260"><g transform="scale(0.29752)" fill="none" stroke="#000" stroke-width="21" stroke-linecap="round" stroke-linejoin="round">
<path d="M452 568 L397 620 L230 455 L475 210 L643 210 L645 380"/>
<circle cx="543" cy="308" r="38"/>
<path d="M525 490 L525 405 L563 405 L563 452 L610 405 L748 540 L705 540 L705 655 L640 655 L640 578 L582 578 L582 655 L525 655 L525 540 L475 540 Z"/>
</g></svg>
<div class="t" style="left:1773.97px;top:459.80px;font-size:55.23px;line-height:55.23px;color:#252423;transform:scaleX(0.8833);transform-origin:0 0;">Kenmerken</div>
<div class="t" style="left:177.20px;top:658.10px;font-size:29.51px;line-height:29.51px;color:#2597d6;transform:scaleX(0.9416);transform-origin:0 0;">Aantal eenheden per soort</div>
<div class="a" style="left:377px;top:750.5px;width:277.5px;height:64.5px;background:#b5d855;"></div>
<div class="t" style="left:577.66px;top:770.30px;font-size:25.15px;line-height:25.15px;color:#ffffff;transform:scaleX(0.9425);transform-origin:0 0;">7.853</div>
<div class="t" style="left:220.40px;top:771.00px;font-size:25.87px;line-height:25.87px;color:#5b5b5b;transform:scaleX(0.9910);transform-origin:0 0;">Woonruimte</div>
<div class="a" style="left:377px;top:835.2px;width:18.8px;height:64.1px;background:#b5d855;"></div>
<div class="t" style="left:210.75px;top:856.00px;font-size:25.87px;line-height:25.87px;color:#5b5b5b;transform:scaleX(0.9254);transform-origin:0 0;">Parkeergele...</div>
<div class="t" style="left:412.35px;top:855.30px;font-size:25.15px;line-height:25.15px;color:#5b5b5b;transform:scaleX(0.9538);transform-origin:0 0;">521</div>
<div class="a" style="left:377px;top:919.5px;width:4.6px;height:64.7px;background:#b5d855;"></div>
<div class="t" style="left:284.12px;top:940.30px;font-size:25.87px;line-height:25.87px;color:#5b5b5b;transform:scaleX(0.9840);transform-origin:0 0;">Overig</div>
<div class="t" style="left:398.85px;top:940.30px;font-size:25.15px;line-height:25.15px;color:#5b5b5b;transform:scaleX(0.9463);transform-origin:0 0;">121</div>
<div class="a" style="left:377px;top:1003.8px;width:3px;height:64.8px;background:#b5d855;"></div>
<div class="t" style="left:203.95px;top:1024.60px;font-size:25.87px;line-height:25.87px;color:#5b5b5b;transform:scaleX(0.9750);transform-origin:0 0;">Bedrijfsruimte</div>
<div class="t" style="left:395.39px;top:1024.60px;font-size:25.15px;line-height:25.15px;color:#5b5b5b;transform:scaleX(1.0126);transform-origin:0 0;">62</div>
<div class="t" style="left:771.00px;top:658.10px;font-size:29.51px;line-height:29.51px;color:#2597d6;transform:scaleX(0.9453);transform-origin:0 0;">Verloop aantal eenheden in exploitatie</div>
<div class="a" style="left:770.4px;top:727.6px;width:64.7px;height:4.2px;background:#2596d8;"></div>
<div class="t" style="left:841.20px;top:717.70px;font-size:26.89px;line-height:26.89px;color:#5b5b5b;transform:scaleX(0.9124);transform-origin:0 0;">Actueel</div>
<div class="a" style="left:934.3px;top:727.6px;width:64px;height:4.2px;background:#b5d855;"></div>
<div class="t" style="left:1004.80px;top:717.70px;font-size:26.89px;line-height:26.89px;color:#5b5b5b;transform:scaleX(0.9200);transform-origin:0 0;">Vorig jaar</div>
<div class="t" style="left:771.07px;top:827.30px;font-size:25.44px;line-height:25.44px;color:#5b5b5b;transform:scaleX(0.9347);transform-origin:0 0;">8.600</div>
<div class="t" style="left:771.07px;top:980.10px;font-size:25.44px;line-height:25.44px;color:#5b5b5b;transform:scaleX(0.9347);transform-origin:0 0;">8.550</div>
<svg class="a" style="left:0px;top:0px;" width="1480" height="1130" viewBox="0 0 1480 1130"><path d="M851.3 839.2 L1419.6 839.2 M851.3 992.3 L1419.6 992.3" stroke="#c4c4c4" stroke-width="2.6" stroke-dasharray="3 9.5" stroke-dashoffset="-1"/>
<polyline points="871.5,865.5 920.2,1012.2 969.0,1006.2 1017.8,1000.4 1066.5,985.3 1115.2,975.8 1164.0,975.1 1212.8,970.8 1261.5,953.9 1310.2,834.8 1359.0,831.8 1407.8,835.2" fill="none" stroke="#2596d8" stroke-width="5.8" stroke-linejoin="round" stroke-linecap="round"/>
<polyline points="871.5,997.7 920.2,994.4 969.0,987.6 1017.8,985.3 1066.5,982.6 1115.2,980.2 1164.0,975.8 1212.8,966.4 1261.5,956.3 1310.2,947.8 1359.0,945.5 1407.8,906.0" fill="none" stroke="#b5d855" stroke-width="5.8" stroke-linejoin="round" stroke-linecap="round"/></svg>
<div class="t" style="left:845.5px;top:1039px;font-size:26px;line-height:26px;color:#5b5b5b;transform:translate(-100%,-8px) rotate(-40deg) scaleX(0.95);transform-origin:100% 0;">jan</div>
<div class="t" style="left:894.25px;top:1039px;font-size:26px;line-height:26px;color:#5b5b5b;transform:translate(-100%,-8px) rotate(-40deg) scaleX(0.95);transform-origin:100% 0;">feb</div>
<div class="t" style="left:943.0px;top:1039px;font-size:26px;line-height:26px;color:#5b5b5b;transform:translate(-100%,-8px) rotate(-40deg) scaleX(0.95);transform-origin:100% 0;">mrt</div>
<div class="t" style="left:991.75px;top:1039px;font-size:26px;line-height:26px;color:#5b5b5b;transform:translate(-100%,-8px) rotate(-40deg) scaleX(0.95);transform-origin:100% 0;">apr</div>
<div class="t" style="left:1040.5px;top:1039px;font-size:26px;line-height:26px;color:#5b5b5b;transform:translate(-100%,-8px) rotate(-40deg) scaleX(0.95);transform-origin:100% 0;">mei</div>
<div class="t" style="left:1089.25px;top:1039px;font-size:26px;line-height:26px;color:#5b5b5b;transform:translate(-100%,-8px) rotate(-40deg) scaleX(0.95);transform-origin:100% 0;">jun</div>
<div class="t" style="left:1138.0px;top:1039px;font-size:26px;line-height:26px;color:#5b5b5b;transform:translate(-100%,-8px) rotate(-40deg) scaleX(0.95);transform-origin:100% 0;">jul</div>
<div class="t" style="left:1186.75px;top:1039px;font-size:26px;line-height:26px;color:#5b5b5b;transform:translate(-100%,-8px) rotate(-40deg) scaleX(0.95);transform-origin:100% 0;">aug</div>
<div class="t" style="left:1235.5px;top:1039px;font-size:26px;line-height:26px;color:#5b5b5b;transform:translate(-100%,-8px) rotate(-40deg) scaleX(0.95);transform-origin:100% 0;">sep</div>
<div class="t" style="left:1284.25px;top:1039px;font-size:26px;line-height:26px;color:#5b5b5b;transform:translate(-100%,-8px) rotate(-40deg) scaleX(0.95);transform-origin:100% 0;">okt</div>
<div class="t" style="left:1333.0px;top:1039px;font-size:26px;line-height:26px;color:#5b5b5b;transform:translate(-100%,-8px) rotate(-40deg) scaleX(0.95);transform-origin:100% 0;">nov</div>
<div class="t" style="left:1381.75px;top:1039px;font-size:26px;line-height:26px;color:#5b5b5b;transform:translate(-100%,-8px) rotate(-40deg) scaleX(0.95);transform-origin:100% 0;">dec</div>
<div class="t" style="left:1525.30px;top:659.50px;font-size:29.65px;line-height:29.65px;color:#2597d6;transform:scaleX(0.9037);transform-origin:0 0;">Aantal eenheden (WOO, BED, MOG, INT) naar energielabel</div>
<div class="a" style="left:2436px;top:654px;width:355px;height:48px;background:#c6cbcd;border:3.5px solid #b3b8bb;border-radius:24px;box-sizing:border-box;"></div>
<div class="t" style="left:2475.06px;top:667.90px;font-size:28.49px;line-height:28.49px;color:#ffffff;transform:scaleX(0.9690);transform-origin:0 0;">Energie index op kaart</div>
<div class="a" style="left:1567.5px;top:1041.1px;width:84.3px;height:11.9px;background:#999999;"></div>
<div class="t" style="left:1596.71px;top:1001.10px;font-size:25.44px;line-height:25.44px;color:#5b5b5b;transform:scaleX(0.9200);transform-origin:0 0;">92</div>
<div class="t" style="left:1575.94px;top:1067.30px;font-size:24.71px;line-height:24.71px;color:#5b5b5b;transform:scaleX(0.9618);transform-origin:0 0;">(Leeg)</div>
<div class="a" style="left:1674.7px;top:1050.9px;width:84.3px;height:2.1px;background:#999999;"></div>
<div class="t" style="left:1710.41px;top:1010.90px;font-size:25.44px;line-height:25.44px;color:#5b5b5b;transform:scaleX(0.9200);transform-origin:0 0;">7</div>
<div class="t" style="left:1675.40px;top:1067.30px;font-size:24.71px;line-height:24.71px;color:#5b5b5b;transform:scaleX(1.1218);transform-origin:0 0;">A++++</div>
<div class="a" style="left:1781.9px;top:1043.4px;width:84.3px;height:9.6px;background:#35a456;"></div>
<div class="t" style="left:1810.65px;top:1003.40px;font-size:25.44px;line-height:25.44px;color:#5b5b5b;transform:scaleX(0.9200);transform-origin:0 0;">75</div>
<div class="t" style="left:1800.30px;top:1067.30px;font-size:24.71px;line-height:24.71px;color:#5b5b5b;transform:scaleX(1.0516);transform-origin:0 0;">A++</div>
<div class="a" style="left:1889.1px;top:1017.1px;width:84.3px;height:35.9px;background:#35a456;"></div>
<div class="t" style="left:1911.80px;top:977.10px;font-size:25.44px;line-height:25.44px;color:#5b5b5b;transform:scaleX(0.9200);transform-origin:0 0;">272</div>
<div class="t" style="left:1915.60px;top:1067.30px;font-size:24.71px;line-height:24.71px;color:#5b5b5b;transform:scaleX(1.0306);transform-origin:0 0;">A+</div>
<div class="a" style="left:1996.3px;top:829.2px;width:84.3px;height:223.8px;background:#35a456;"></div>
<div class="t" style="left:2008.79px;top:789.20px;font-size:25.44px;line-height:25.44px;color:#5b5b5b;transform:scaleX(0.9200);transform-origin:0 0;">1.683</div>
<div class="t" style="left:2031.40px;top:1067.30px;font-size:24.71px;line-height:24.71px;color:#5b5b5b;transform:scaleX(0.9294);transform-origin:0 0;">A</div>
<div class="a" style="left:2103.5px;top:939.0px;width:84.3px;height:114.0px;background:#7ab753;"></div>
<div class="t" style="left:2125.74px;top:899.00px;font-size:25.44px;line-height:25.44px;color:#5b5b5b;transform:scaleX(0.9200);transform-origin:0 0;">860</div>
<div class="t" style="left:2138.17px;top:1067.30px;font-size:24.71px;line-height:24.71px;color:#5b5b5b;transform:scaleX(0.9143);transform-origin:0 0;">B</div>
<div class="a" style="left:2210.7px;top:740.4px;width:84.3px;height:312.6px;background:#c3d545;"></div>
<div class="t" style="left:2223.65px;top:756.90px;font-size:25.44px;line-height:25.44px;color:#ffffff;transform:scaleX(0.9200);transform-origin:0 0;">2.351</div>
<div class="t" style="left:2244.85px;top:1067.30px;font-size:24.71px;line-height:24.71px;color:#5b5b5b;transform:scaleX(0.9500);transform-origin:0 0;">C</div>
<div class="a" style="left:2317.9px;top:883.8px;width:84.3px;height:169.2px;background:#fcea2b;"></div>
<div class="t" style="left:2330.39px;top:843.80px;font-size:25.44px;line-height:25.44px;color:#5b5b5b;transform:scaleX(0.9200);transform-origin:0 0;">1.275</div>
<div class="t" style="left:2350.62px;top:1067.30px;font-size:24.71px;line-height:24.71px;color:#5b5b5b;transform:scaleX(1.0400);transform-origin:0 0;">D</div>
<div class="a" style="left:2425.1px;top:975.9px;width:84.3px;height:77.1px;background:#eab332;"></div>
<div class="t" style="left:2447.80px;top:935.90px;font-size:25.44px;line-height:25.44px;color:#5b5b5b;transform:scaleX(0.9200);transform-origin:0 0;">581</div>
<div class="t" style="left:2461.16px;top:1067.30px;font-size:24.71px;line-height:24.71px;color:#5b5b5b;transform:scaleX(0.7714);transform-origin:0 0;">E</div>
<div class="a" style="left:2532.3px;top:989.1px;width:84.3px;height:63.9px;background:#d7702d;"></div>
<div class="t" style="left:2555.00px;top:949.10px;font-size:25.44px;line-height:25.44px;color:#5b5b5b;transform:scaleX(0.9200);transform-origin:0 0;">483</div>
<div class="t" style="left:2567.99px;top:1067.30px;font-size:24.71px;line-height:24.71px;color:#5b5b5b;transform:scaleX(0.8538);transform-origin:0 0;">F</div>
<div class="a" style="left:2639.5px;top:1022.0px;width:84.3px;height:31.0px;background:#c9232b;"></div>
<div class="t" style="left:2661.74px;top:982.00px;font-size:25.44px;line-height:25.44px;color:#5b5b5b;transform:scaleX(0.9200);transform-origin:0 0;">236</div>
<div class="t" style="left:2673.37px;top:1067.30px;font-size:24.71px;line-height:24.71px;color:#5b5b5b;transform:scaleX(0.9294);transform-origin:0 0;">G</div>
<div class="t" style="left:188.38px;top:1200.20px;font-size:26.50px;line-height:26.50px;color:#1d7ab8;transform:scaleX(0.9200);transform-origin:0 0;">code</div>
<div class="t" style="left:295.78px;top:1200.20px;font-size:26.50px;line-height:26.50px;color:#1d7ab8;transform:scaleX(0.9200);transform-origin:0 0;">naam</div>
<div class="t" style="left:406.02px;top:1200.20px;font-size:26.50px;line-height:26.50px;color:#1d7ab8;transform:scaleX(0.9830);transform-origin:0 0;">begindatum</div>
<div class="t" style="left:563.01px;top:1200.20px;font-size:26.50px;line-height:26.50px;color:#1d7ab8;transform:scaleX(0.9920);transform-origin:0 0;">begroting</div>
<div class="t" style="left:737.17px;top:1200.20px;font-size:26.50px;line-height:26.50px;color:#1d7ab8;transform:scaleX(0.9270);transform-origin:0 0;">realisatie</div>
<div class="t" style="left:931.65px;top:1200.20px;font-size:26.50px;line-height:26.50px;color:#1d7ab8;transform:scaleX(0.9534);transform-origin:0 0;">prognose</div>
<div class="a" style="left:179px;top:1253px;width:937px;height:2.5px;background:#2a7fb8;"></div>
<div class="a" style="left:179px;top:1255.5px;width:937px;height:350.5px;overflow:hidden;">
<div class="a" style="left:0;top:52.2px;width:937px;height:52.2px;background:#e5edf0;"></div>
<div class="a" style="left:0;top:156.6px;width:937px;height:52.2px;background:#e5edf0;"></div>
<div class="a" style="left:0;top:261.0px;width:937px;height:52.2px;background:#e5edf0;"></div>
</div>
<div class="a" style="left:396px;top:1255.5px;width:1px;height:350px;background:rgba(255,255,255,0.35);"></div>
<div class="a" style="left:553px;top:1255.5px;width:1px;height:350px;background:rgba(255,255,255,0.35);"></div>
<div class="a" style="left:726.3px;top:1255.5px;width:1px;height:350px;background:rgba(255,255,255,0.35);"></div>
<div class="a" style="left:921.5px;top:1255.5px;width:1px;height:350px;background:rgba(255,255,255,0.35);"></div>
<div class="t" style="left:188.34px;top:1271.90px;font-size:24.27px;line-height:24.27px;color:#5b5b5b;transform:scaleX(0.9555);transform-origin:0 0;">7******2</div>
<div class="t" style="left:294.97px;top:1271.90px;font-size:24.27px;line-height:24.27px;color:#5b5b5b;transform:scaleX(0.9279);transform-origin:0 0;">S******g</div>
<div class="t" style="left:406.08px;top:1271.90px;font-size:24.27px;line-height:24.27px;color:#5b5b5b;transform:scaleX(0.9163);transform-origin:0 0;">29-8-2023</div>
<div class="t" style="left:593.00px;top:1271.90px;font-size:24.27px;line-height:24.27px;color:#5b5b5b;transform:scaleX(0.8598);transform-origin:0 0;">€ 198.464,01</div>
<div class="t" style="left:188.33px;top:1323.90px;font-size:24.27px;line-height:24.27px;color:#5b5b5b;transform:scaleX(0.9665);transform-origin:0 0;">N******0</div>
<div class="t" style="left:294.95px;top:1323.90px;font-size:24.27px;line-height:24.27px;color:#5b5b5b;transform:scaleX(0.9457);transform-origin:0 0;">D******k</div>
<div class="t" style="left:406.07px;top:1323.90px;font-size:24.27px;line-height:24.27px;color:#5b5b5b;transform:scaleX(0.9319);transform-origin:0 0;">14-11-2022</div>
<div class="t" style="left:799.30px;top:1323.90px;font-size:24.27px;line-height:24.27px;color:#5b5b5b;transform:scaleX(0.8638);transform-origin:0 0;">€ 15.814,74</div>
<div class="t" style="left:994.10px;top:1323.90px;font-size:24.27px;line-height:24.27px;color:#5b5b5b;transform:scaleX(0.8614);transform-origin:0 0;">€ 15.814,70</div>
<div class="t" style="left:188.33px;top:1375.90px;font-size:24.27px;line-height:24.27px;color:#5b5b5b;transform:scaleX(0.9665);transform-origin:0 0;">N******0</div>
<div class="t" style="left:294.94px;top:1375.90px;font-size:24.27px;line-height:24.27px;color:#5b5b5b;transform:scaleX(0.9650);transform-origin:0 0;">H******g</div>
<div class="t" style="left:406.08px;top:1375.90px;font-size:24.27px;line-height:24.27px;color:#5b5b5b;transform:scaleX(0.9180);transform-origin:0 0;">1-1-2023</div>
<div class="t" style="left:1079.30px;top:1375.90px;font-size:24.27px;line-height:24.27px;color:#5b5b5b;transform:scaleX(0.9105);transform-origin:0 0;">€ -</div>
<div class="t" style="left:188.33px;top:1427.90px;font-size:24.27px;line-height:24.27px;color:#5b5b5b;transform:scaleX(0.9665);transform-origin:0 0;">N******0</div>
<div class="t" style="left:294.93px;top:1427.90px;font-size:24.27px;line-height:24.27px;color:#5b5b5b;transform:scaleX(0.9732);transform-origin:0 0;">H******n</div>
<div class="t" style="left:406.08px;top:1427.90px;font-size:24.27px;line-height:24.27px;color:#5b5b5b;transform:scaleX(0.9180);transform-origin:0 0;">1-1-2023</div>
<div class="t" style="left:1005.90px;top:1427.90px;font-size:24.27px;line-height:24.27px;color:#5b5b5b;transform:scaleX(0.8599);transform-origin:0 0;">€ 2.677,13</div>
<div class="t" style="left:188.33px;top:1479.90px;font-size:24.27px;line-height:24.27px;color:#5b5b5b;transform:scaleX(0.9665);transform-origin:0 0;">N******0</div>
<div class="t" style="left:294.91px;top:1479.90px;font-size:24.27px;line-height:24.27px;color:#5b5b5b;transform:scaleX(0.9927);transform-origin:0 0;">R******f</div>
<div class="t" style="left:406.08px;top:1479.90px;font-size:24.27px;line-height:24.27px;color:#5b5b5b;transform:scaleX(0.9180);transform-origin:0 0;">1-1-2022</div>
<div class="t" style="left:811.50px;top:1479.90px;font-size:24.27px;line-height:24.27px;color:#5b5b5b;transform:scaleX(0.8590);transform-origin:0 0;">€ 2.722,50</div>
<div class="t" style="left:1005.90px;top:1479.90px;font-size:24.27px;line-height:24.27px;color:#5b5b5b;transform:scaleX(0.8599);transform-origin:0 0;">€ 2.722,50</div>
<div class="t" style="left:188.33px;top:1531.90px;font-size:24.27px;line-height:24.27px;color:#5b5b5b;transform:scaleX(0.9665);transform-origin:0 0;">N******1</div>
<div class="t" style="left:294.93px;top:1531.90px;font-size:24.27px;line-height:24.27px;color:#5b5b5b;transform:scaleX(0.9715);transform-origin:0 0;">F******2</div>
<div class="t" style="left:406.08px;top:1531.90px;font-size:24.27px;line-height:24.27px;color:#5b5b5b;transform:scaleX(0.9180);transform-origin:0 0;">1-1-2023</div>
<div class="t" style="left:811.50px;top:1531.90px;font-size:24.27px;line-height:24.27px;color:#5b5b5b;transform:scaleX(0.8590);transform-origin:0 0;">€ 4.518,97</div>
<div class="t" style="left:981.90px;top:1531.90px;font-size:24.27px;line-height:24.27px;color:#5b5b5b;transform:scaleX(0.8655);transform-origin:0 0;">€ 339.999,06</div>
<div class="t" style="left:188.33px;top:1583.90px;font-size:24.27px;line-height:24.27px;color:#5b5b5b;transform:scaleX(0.9665);transform-origin:0 0;">N******1</div>
<div class="t" style="left:294.92px;top:1583.90px;font-size:24.27px;line-height:24.27px;color:#5b5b5b;transform:scaleX(0.9756);transform-origin:0 0;">M******4</div>
<div class="t" style="left:406.08px;top:1583.90px;font-size:24.27px;line-height:24.27px;color:#5b5b5b;transform:scaleX(0.9180);transform-origin:0 0;">1-1-2023</div>
<div class="t" style="left:799.30px;top:1583.90px;font-size:24.27px;line-height:24.27px;color:#5b5b5b;transform:scaleX(0.8638);transform-origin:0 0;">€ 63.497,63</div>
<div class="t" style="left:994.10px;top:1583.90px;font-size:24.27px;line-height:24.27px;color:#5b5b5b;transform:scaleX(0.8614);transform-origin:0 0;">€ 62.021,43</div>
<div class="a" style="left:179px;top:1605px;width:937px;height:3px;background:#2a7fb8;"></div>
<div class="a" style="left:179px;top:1607.4px;width:937px;height:53px;background:#7bb1d8;"></div>
<div class="a" style="left:285.6px;top:1607.4px;width:1px;height:53px;background:rgba(255,255,255,0.28);"></div>
<div class="a" style="left:396px;top:1607.4px;width:1px;height:53px;background:rgba(255,255,255,0.28);"></div>
<div class="a" style="left:553px;top:1607.4px;width:1px;height:53px;background:rgba(255,255,255,0.28);"></div>
<div class="a" style="left:726.3px;top:1607.4px;width:1px;height:53px;background:rgba(255,255,255,0.28);"></div>
<div class="a" style="left:921.5px;top:1607.4px;width:1px;height:53px;background:rgba(255,255,255,0.28);"></div>
<div class="t" style="left:189.30px;top:1622.60px;font-size:28.05px;line-height:28.05px;color:#ffffff;font-weight:700;transform:scaleX(0.8931);transform-origin:0 0;">Totaal</div>
<div class="t" style="left:567.00px;top:1622.60px;font-size:28.05px;line-height:28.05px;color:#ffffff;font-weight:700;transform:scaleX(0.9034);transform-origin:0 0;">€ 198.464,01</div>
<div class="t" style="left:740.40px;top:1622.60px;font-size:28.05px;line-height:28.05px;color:#ffffff;font-weight:700;transform:scaleX(0.9070);transform-origin:0 0;">€ 1.635.990,15</div>
<div class="t" style="left:934.80px;top:1622.60px;font-size:28.05px;line-height:28.05px;color:#ffffff;font-weight:700;transform:scaleX(0.9075);transform-origin:0 0;">€ 2.178.244,02</div>
<div class="a" style="left:1447px;top:1186px;width:14px;height:474px;background:#f4f6f6;border-radius:7px;"></div>
<div class="a" style="left:1447px;top:1186px;width:14px;height:88px;background:#a6a8a7;border-radius:7px;"></div>
<div class="t" style="left:1525.20px;top:1190.20px;font-size:29.65px;line-height:29.65px;color:#2597d6;transform:scaleX(0.9396);transform-origin:0 0;">Aantal eenheden onderverdeeld naar bouwperiode</div>
<div class="a" style="left:1594.8px;top:1295.6px;width:100.8px;height:275.9px;background:#2396dc;"></div>
<div class="t" style="left:1615.15px;top:1255.30px;font-size:25.87px;line-height:25.87px;color:#5b5b5b;transform:scaleX(0.9200);transform-origin:0 0;">1.935</div>
<div class="t" style="left:1611.29px;top:1600.30px;font-size:25.87px;line-height:25.87px;color:#5b5b5b;transform:scaleX(0.9200);transform-origin:0 0;">1945 -</div>
<div class="t" style="left:1618.45px;top:1634.60px;font-size:25.87px;line-height:25.87px;color:#5b5b5b;transform:scaleX(0.9200);transform-origin:0 0;">1959</div>
<div class="a" style="left:1723.8px;top:1409.3px;width:100.8px;height:162.2px;background:#2396dc;"></div>
<div class="t" style="left:1744.10px;top:1369.00px;font-size:25.87px;line-height:25.87px;color:#5b5b5b;transform:scaleX(0.9200);transform-origin:0 0;">1.139</div>
<div class="t" style="left:1740.24px;top:1600.30px;font-size:25.87px;line-height:25.87px;color:#5b5b5b;transform:scaleX(0.9200);transform-origin:0 0;">1960 -</div>
<div class="t" style="left:1747.40px;top:1634.60px;font-size:25.87px;line-height:25.87px;color:#5b5b5b;transform:scaleX(0.9200);transform-origin:0 0;">1969</div>
<div class="a" style="left:1852.7px;top:1402.2px;width:100.8px;height:169.3px;background:#2396dc;"></div>
<div class="t" style="left:1873.05px;top:1361.90px;font-size:25.87px;line-height:25.87px;color:#5b5b5b;transform:scaleX(0.9200);transform-origin:0 0;">1.188</div>
<div class="t" style="left:1869.19px;top:1600.30px;font-size:25.87px;line-height:25.87px;color:#5b5b5b;transform:scaleX(0.9200);transform-origin:0 0;">1970 -</div>
<div class="t" style="left:1876.35px;top:1634.60px;font-size:25.87px;line-height:25.87px;color:#5b5b5b;transform:scaleX(0.9200);transform-origin:0 0;">1979</div>
<div class="a" style="left:1981.6px;top:1367.4px;width:100.8px;height:204.1px;background:#2396dc;"></div>
<div class="t" style="left:2002.00px;top:1327.10px;font-size:25.87px;line-height:25.87px;color:#5b5b5b;transform:scaleX(0.9200);transform-origin:0 0;">1.431</div>
<div class="t" style="left:1998.14px;top:1600.30px;font-size:25.87px;line-height:25.87px;color:#5b5b5b;transform:scaleX(0.9200);transform-origin:0 0;">1980 -</div>
<div class="t" style="left:2005.30px;top:1634.60px;font-size:25.87px;line-height:25.87px;color:#5b5b5b;transform:scaleX(0.9200);transform-origin:0 0;">1989</div>
<div class="a" style="left:2110.6px;top:1464.1px;width:100.8px;height:107.4px;background:#2396dc;"></div>
<div class="t" style="left:2140.87px;top:1423.80px;font-size:25.87px;line-height:25.87px;color:#5b5b5b;transform:scaleX(0.9200);transform-origin:0 0;">754</div>
<div class="t" style="left:2127.09px;top:1600.30px;font-size:25.87px;line-height:25.87px;color:#5b5b5b;transform:scaleX(0.9200);transform-origin:0 0;">1990 -</div>
<div class="t" style="left:2134.25px;top:1634.60px;font-size:25.87px;line-height:25.87px;color:#5b5b5b;transform:scaleX(0.9200);transform-origin:0 0;">1999</div>
<div class="a" style="left:2239.6px;top:1512.3px;width:100.8px;height:59.2px;background:#2396dc;"></div>
<div class="t" style="left:2270.28px;top:1472.00px;font-size:25.87px;line-height:25.87px;color:#5b5b5b;transform:scaleX(0.9200);transform-origin:0 0;">417</div>
<div class="t" style="left:2256.04px;top:1600.30px;font-size:25.87px;line-height:25.87px;color:#5b5b5b;transform:scaleX(0.9200);transform-origin:0 0;">2000 -</div>
<div class="t" style="left:2263.20px;top:1634.60px;font-size:25.87px;line-height:25.87px;color:#5b5b5b;transform:scaleX(0.9200);transform-origin:0 0;">2009</div>
<div class="a" style="left:2368.5px;top:1461.7px;width:100.8px;height:109.8px;background:#2396dc;"></div>
<div class="t" style="left:2398.77px;top:1421.40px;font-size:25.87px;line-height:25.87px;color:#5b5b5b;transform:scaleX(0.9200);transform-origin:0 0;">773</div>
<div class="t" style="left:2384.99px;top:1600.30px;font-size:25.87px;line-height:25.87px;color:#5b5b5b;transform:scaleX(0.9200);transform-origin:0 0;">2010 -</div>
<div class="t" style="left:2392.15px;top:1634.60px;font-size:25.87px;line-height:25.87px;color:#5b5b5b;transform:scaleX(0.9200);transform-origin:0 0;">2019</div>
<div class="a" style="left:2497.4px;top:1548.1px;width:100.8px;height:23.4px;background:#2396dc;"></div>
<div class="t" style="left:2527.72px;top:1507.80px;font-size:25.87px;line-height:25.87px;color:#5b5b5b;transform:scaleX(0.9200);transform-origin:0 0;">167</div>
<div class="t" style="left:2505.03px;top:1600.30px;font-size:25.87px;line-height:25.87px;color:#5b5b5b;transform:scaleX(0.9200);transform-origin:0 0;">2020 en</div>
<div class="t" style="left:2524.07px;top:1634.60px;font-size:25.87px;line-height:25.87px;color:#5b5b5b;transform:scaleX(0.9200);transform-origin:0 0;">later</div>
<div class="a" style="left:2626.4px;top:1464.3px;width:100.8px;height:107.2px;background:#2396dc;"></div>
<div class="t" style="left:2656.67px;top:1424.00px;font-size:25.87px;line-height:25.87px;color:#5b5b5b;transform:scaleX(0.9200);transform-origin:0 0;">753</div>
<div class="t" style="left:2633.98px;top:1600.30px;font-size:25.87px;line-height:25.87px;color:#5b5b5b;transform:scaleX(0.9200);transform-origin:0 0;">tot 1945</div>
</body></html>
